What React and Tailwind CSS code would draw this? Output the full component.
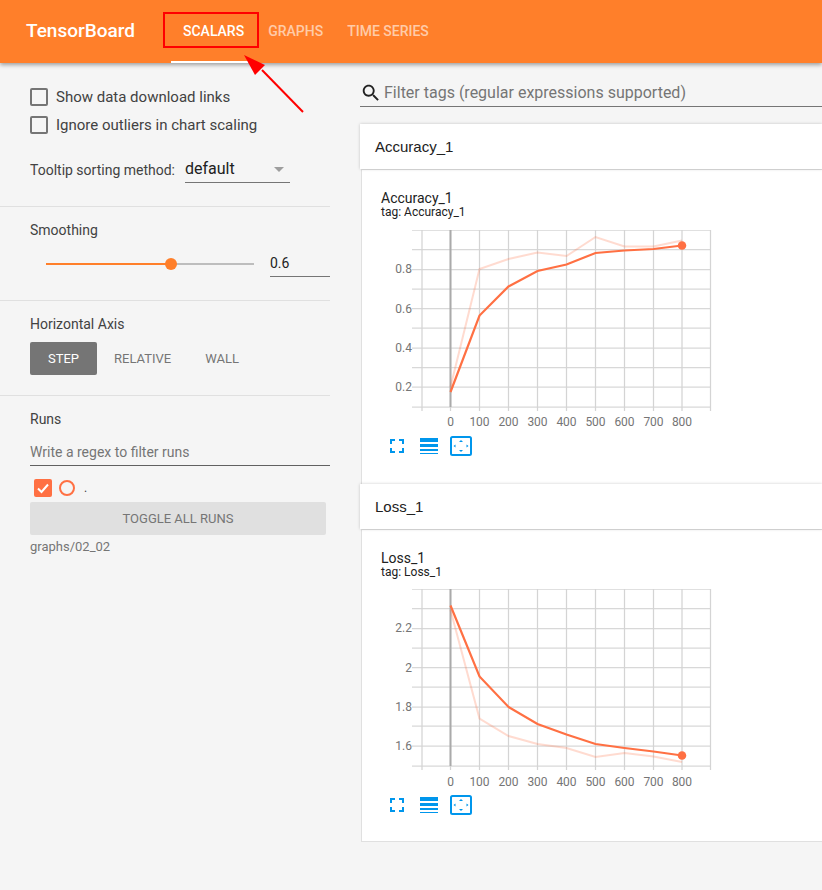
const GRID_XS = [422, 450.5, 479.5, 508.5, 537.5, 566.5, 595.5, 624.5, 653.5, 682, 710.5]
const TICK_LABELS = [0, 100, 200, 300, 400, 500, 600, 700, 800]

const accuracy = {
  title: 'Accuracy_1',
  tagGap: 'mb-[11px]',
  tickY: 196,
  rows: [19.5, 39.5, 59, 78.5, 98, 118, 137.5, 157, 177],
  yLabels: [
    ['0.8', 39],
    ['0.6', 78.5],
    ['0.4', 118],
    ['0.2', 157],
  ],
  main: [[450.5, 162], [479.5, 85.5], [508.5, 56.5], [537.5, 41], [566.5, 34.5], [595.5, 23], [624.5, 20.5], [653.5, 19], [682, 15.5]],
  faint: [[450.5, 157], [479.5, 39], [508.5, 29], [537.5, 22.5], [566.5, 26], [595.5, 7], [624.5, 16.5], [653.5, 16.5], [682, 10.5]],
}

const loss = {
  title: 'Loss_1',
  tagGap: 'mb-[10px]',
  tickY: 197,
  rows: [19.5, 39.5, 59, 78.5, 98, 118, 137, 157, 177],
  yLabels: [
    ['2.2', 39],
    ['2', 78.5],
    ['1.8', 118],
    ['1.6', 157],
  ],
  main: [[450.5, 16.5], [479.5, 87.5], [508.5, 118], [537.5, 135], [566.5, 145.5], [595.5, 155], [624.5, 159], [653.5, 162.5], [682, 166.5]],
  faint: [[450.5, 21], [479.5, 129.5], [508.5, 147], [537.5, 155], [566.5, 159], [595.5, 168], [624.5, 164], [653.5, 167.5], [682, 173]],
}

function toPoints(line) {
  return line.map(([x, y]) => `${x - 381},${y}`).join(' ')
}

function Chart({ data }) {
  return (
    <svg width="340" height="202" className="block" style={{ fontFamily: 'Roboto, sans-serif' }}>
      <line x1="31" x2="330" y1="0.5" y2="0.5" stroke="#e0e0e0" />
      {data.rows.map((y) => (
        <line key={y} x1="31" x2="330" y1={y} y2={y} stroke="#d8d8d8" strokeWidth="1.25" />
      ))}
      {GRID_XS.map((x) => (
        <line key={x} x1={x - 381} x2={x - 381} y1="0" y2="181" stroke="#d4d4d4" strokeWidth="1.25" />
      ))}
      <line x1="69.5" x2="69.5" y1="0" y2="177" stroke="#aaaaaa" strokeWidth="2" />
      <polyline points={toPoints(data.faint)} fill="none" stroke="#ff7043" strokeOpacity="0.25" strokeWidth="2" />
      <polyline points={toPoints(data.main)} fill="none" stroke="#ff7043" strokeWidth="2.2" />
      <circle cx="301" cy={data.main[8][1]} r="4.25" fill="#ff7043" />
      {data.yLabels.map(([label, y]) => (
        <text key={label} x="31" y={y + 4} textAnchor="end" fontSize="12" fill="#757575">
          {label}
        </text>
      ))}
      {TICK_LABELS.map((label, i) => (
        <text key={label} x={GRID_XS[i + 1] - 381} y={data.tickY} textAnchor="middle" fontSize="12" fill="#757575">
          {label}
        </text>
      ))}
    </svg>
  )
}

function ChartIcons() {
  return (
    <div className="flex items-center mt-1 ml-[9px]">
      <svg width="14" height="14" className="block" fill="none" stroke="#0096ec" strokeWidth="2">
        <path d="M1 5V1H5M9 1H13V5M13 9V13H9M5 13H1V9" />
      </svg>
      <svg width="18" height="17" className="block ml-4" fill="#0096ec">
        <rect x="0" y="0" width="18" height="4" />
        <rect x="0" y="6" width="18" height="3" />
        <rect x="0" y="11" width="18" height="2" />
        <rect x="0" y="15" width="18" height="1" />
      </svg>
      <svg width="22" height="20" className="block ml-3" fill="#0096ec">
        <rect x="1" y="1" width="20" height="18" rx="1.5" fill="none" stroke="#0096ec" strokeWidth="2" />
        <path d="M9 6L11 4L13 6ZM9 14L11 16L13 14ZM5.5 8.5L3.5 10L5.5 11.5ZM16.5 8.5L18.5 10L16.5 11.5Z" />
      </svg>
    </div>
  )
}

function ChartCard({ data, bodyHeight }) {
  return (
    <section>
      <div className="relative h-[45px] bg-white shadow-[0_0_3px_rgba(0,0,0,0.2)] pl-[15px] pt-[2px] flex items-center font-['Liberation_Sans',sans-serif] text-[15px] text-[#212121]">
        {data.title}
      </div>
      <div
        className="ml-px bg-white border-l border-t border-[#e0e0e0] pl-[19px] pt-[20px]"
        style={{ height: bodyHeight }}
      >
        <div className="text-sm leading-4 text-[#212121]">{data.title}</div>
        <div className={`text-xs leading-[13px] text-[#212121] ${data.tagGap}`}>tag: {data.title}</div>
        <Chart data={data} />
        <ChartIcons />
      </div>
    </section>
  )
}

function Checkbox({ label }) {
  return (
    <label className="flex items-center h-7 text-[#424242] text-[15px]">
      <span className="w-[18px] h-[18px] border-2 border-[#757575] rounded-[2px] mr-2" />
      <span className="pt-px">{label}</span>
    </label>
  )
}

export default function App() {
  return (
    <div className="relative w-[822px] h-[890px] overflow-hidden bg-[#f5f5f5] font-['Roboto',sans-serif]">
      <header className="relative z-10 h-[63px] bg-[#ff7f2a] shadow-[0_2px_4px_rgba(0,0,0,0.35)] flex items-stretch pl-[26px] text-white">
        <div className="w-[145px] flex items-center text-[19px] font-medium">TensorBoard</div>
        <nav className="flex text-sm font-medium">
          <div className="px-3 flex items-center border-b-2 border-white pt-[1px]">SCALARS</div>
          <div className="px-3 flex items-center text-white/60 border-b-2 border-transparent pt-[1px]">GRAPHS</div>
          <div className="px-3 flex items-center text-white/60 border-b-2 border-transparent pt-[1px]">TIME SERIES</div>
        </nav>
      </header>

      <div className="flex">
        <aside className="w-[330px] shrink-0">
          <div className="pl-[30px] pt-5 h-[144px] border-b border-[#e0e0e0]">
            <Checkbox label="Show data download links" />
            <Checkbox label="Ignore outliers in chart scaling" />
            <div className="flex items-center mt-[15px] text-sm text-[#424242]">
              <span className="w-[155px] pt-[3px]">Tooltip sorting method:</span>
              <div className="w-[105px] h-[29px] border-b border-[#757575] flex items-center justify-between pr-[6px] pt-[2px] text-base text-[#212121]">
                default
                <span className="w-0 h-0 border-x-[5.5px] border-x-transparent border-t-[5px] border-t-[#9e9e9e]" />
              </div>
            </div>
          </div>

          <div className="pl-[30px] pt-[13px] h-[94px] border-b border-[#e0e0e0]">
            <div className="text-sm text-[#424242] leading-5">Smoothing</div>
            <div className="flex items-center mt-[10px]">
              <div className="relative ml-4 w-[208px] h-[2px] bg-[#bdbdbd]">
                <div className="h-full w-[125px] bg-[#ff7f2a]" />
                <div className="absolute left-[119px] top-[-5px] w-3 h-3 rounded-full bg-[#ff7f2a]" />
              </div>
              <div className="ml-4 w-[60px] h-[27px] border-b border-[#757575] flex items-center text-sm text-[#212121]">0.6</div>
            </div>
          </div>

          <div className="pl-[30px] pt-[13px] h-[95px] border-b border-[#e0e0e0]">
            <div className="text-sm text-[#424242] leading-5">Horizontal Axis</div>
            <div className="flex items-center mt-2 text-[13px] text-[#757575]">
              <div className="w-[67px] h-[33px] rounded-[2px] bg-[#757575] text-white flex items-center justify-center">STEP</div>
              <div className="ml-[17px]">RELATIVE</div>
              <div className="ml-[34px]">WALL</div>
            </div>
          </div>

          <div className="pl-[30px] pt-[13px]">
            <div className="text-sm text-[#424242] leading-5">Runs</div>
            <div className="h-[36px] mt-px border-b border-[#616161] flex items-end pb-[3px] text-sm text-[#757575]">Write a regex to filter runs</div>
            <div className="flex items-center mt-[13px] ml-1 h-[18px]">
              <span className="w-[18px] h-[18px] rounded-[2px] bg-[#ff7043] flex items-center justify-center">
                <svg width="14" height="14" viewBox="0 0 14 14" fill="none" stroke="white" strokeWidth="2">
                  <path d="M2 7.5L5.5 11L12 3.5" />
                </svg>
              </span>
              <span className="ml-[7px] w-4 h-4 rounded-full border-2 border-[#ff7043]" />
              <span className="ml-[9px] text-xs text-[#424242]">.</span>
            </div>
            <div className="mt-[5px] w-[296px] h-[33px] rounded-[2px] bg-[#e0e0e0] flex items-center justify-center text-[13px] text-[#757575]">TOGGLE ALL RUNS</div>
            <div className="mt-[2px] text-[13px] leading-5 text-[#757575]">graphs/02_02</div>
          </div>
        </aside>

        <main className="ml-[30px] flex-1 min-w-0">
          <div className="mt-4 h-[28px] border-b border-[#757575] flex items-center text-base text-[#757575]">
            <svg width="22" height="22" viewBox="0 0 24 24" fill="#212121" className="mr-[2px] shrink-0">
              <path d="M15.5 14h-.79l-.28-.27C15.41 12.59 16 11.11 16 9.5 16 5.91 13.09 3 9.5 3S3 5.91 3 9.5 5.91 16 9.5 16c1.61 0 3.09-.59 4.23-1.57l.27.28v.79l5 4.99L20.49 19l-4.99-5zm-6 0C7.01 14 5 11.99 5 9.5S7.01 5 9.5 5 14 7.01 14 9.5 11.99 14 9.5 14z" />
            </svg>
            Filter tags (regular expressions supported)
          </div>
          <div className="mt-[17px]">
            <ChartCard data={accuracy} bodyHeight={315} />
            <ChartCard data={loss} bodyHeight={312} />
          </div>
          <div className="ml-px h-px bg-[#e0e0e0]" />
        </main>
      </div>

      {/* red annotation drawn on top of the screenshot */}
      <div className="absolute left-[163px] top-3 w-[96px] h-[36px] border-2 border-[#ff0000] z-20" />
      <svg width="80" height="70" className="absolute left-[240px] top-[50px] z-20">
        <path d="M63 62L22 20" stroke="#ff0000" strokeWidth="2" />
        <path d="M4 5L25 15L15 25Z" fill="#ff0000" />
      </svg>
    </div>
  )
}
